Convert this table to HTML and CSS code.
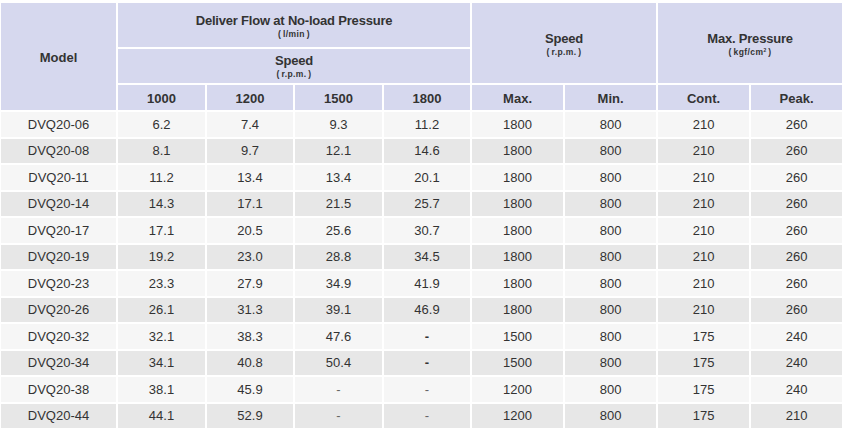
FILE: index.html
```html
<!DOCTYPE html>
<html>
<head>
<meta charset="utf-8">
<link rel="stylesheet" href="styles.css">
</head>
<body>
<table class="spec">
  <colgroup>
    <col class="c-model"><col class="c-a"><col class="c-b"><col class="c-a"><col class="c-b">
    <col class="c-w"><col class="c-w"><col class="c-w"><col class="c-w">
  </colgroup>
  <thead>
    <tr class="h1">
      <th rowspan="3" class="model">Model</th>
      <th colspan="4"><div class="t t-deliver">Deliver Flow at No-load Pressure</div><div class="s">( l/min )</div></th>
      <th colspan="2" rowspan="2"><div class="t t-speed">Speed</div><div class="s">( r.p.m. )</div></th>
      <th colspan="2" rowspan="2"><div class="t t-speed">Max. Pressure</div><div class="s">( kgf/cm<sup>2</sup> )</div></th>
    </tr>
    <tr class="h2">
      <th colspan="4"><div class="t t-sp2">Speed</div><div class="s">( r.p.m. )</div></th>
    </tr>
    <tr class="h3">
      <th>1000</th><th>1200</th><th>1500</th><th>1800</th>
      <th>Max.</th><th>Min.</th><th>Cont.</th><th>Peak.</th>
    </tr>
  </thead>
  <tbody>
    <tr><td>DVQ20-06</td><td>6.2</td><td>7.4</td><td>9.3</td><td>11.2</td><td>1800</td><td>800</td><td>210</td><td>260</td></tr>
    <tr><td>DVQ20-08</td><td>8.1</td><td>9.7</td><td>12.1</td><td>14.6</td><td>1800</td><td>800</td><td>210</td><td>260</td></tr>
    <tr><td>DVQ20-11</td><td>11.2</td><td>13.4</td><td>13.4</td><td>20.1</td><td>1800</td><td>800</td><td>210</td><td>260</td></tr>
    <tr><td>DVQ20-14</td><td>14.3</td><td>17.1</td><td>21.5</td><td>25.7</td><td>1800</td><td>800</td><td>210</td><td>260</td></tr>
    <tr><td>DVQ20-17</td><td>17.1</td><td>20.5</td><td>25.6</td><td>30.7</td><td>1800</td><td>800</td><td>210</td><td>260</td></tr>
    <tr><td>DVQ20-19</td><td>19.2</td><td>23.0</td><td>28.8</td><td>34.5</td><td>1800</td><td>800</td><td>210</td><td>260</td></tr>
    <tr><td>DVQ20-23</td><td>23.3</td><td>27.9</td><td>34.9</td><td>41.9</td><td>1800</td><td>800</td><td>210</td><td>260</td></tr>
    <tr><td>DVQ20-26</td><td>26.1</td><td>31.3</td><td>39.1</td><td>46.9</td><td>1800</td><td>800</td><td>210</td><td>260</td></tr>
    <tr><td>DVQ20-32</td><td>32.1</td><td>38.3</td><td>47.6</td><td class="dash">-</td><td>1500</td><td>800</td><td>175</td><td>240</td></tr>
    <tr><td>DVQ20-34</td><td>34.1</td><td>40.8</td><td>50.4</td><td class="dash">-</td><td>1500</td><td>800</td><td>175</td><td>240</td></tr>
    <tr><td>DVQ20-38</td><td>38.1</td><td>45.9</td><td class="dash light">-</td><td class="dash light">-</td><td>1200</td><td>800</td><td>175</td><td>240</td></tr>
    <tr><td>DVQ20-44</td><td>44.1</td><td>52.9</td><td class="dash light">-</td><td class="dash light">-</td><td>1200</td><td>800</td><td>175</td><td>210</td></tr>
  </tbody>
</table>
</body>
</html>
```
FILE: styles.css
```css
html, body {
  margin: 0;
  padding: 0;
  background: #ffffff;
}

.spec {
  margin: 1px 0 0 -1px;
  border-collapse: separate;
  border-spacing: 2px;
  table-layout: fixed;
  width: 845px;
  font-family: "Liberation Sans", Arial, sans-serif;
  color: #333333;
}

.c-model { width: 115px; }
.c-a { width: 87px; }
.c-b { width: 86px; }
.c-w { width: 91px; }

th {
  background: #d6d8ee;
  font-weight: bold;
  font-size: 13px;
  text-align: center;
  vertical-align: middle;
  padding: 0;
  color: #333333;
}

.h1 { height: 44px; }
.h2 { height: 34px; }
.h3 { height: 25px; }

.h3 th { padding-top: 1px; }

.model { padding-top: 1px; }

.t {
  line-height: 15px;
  letter-spacing: -0.2px;
}

.s {
  font-size: 8.5px;
  line-height: 11px;
  margin-top: 1px;
  letter-spacing: 0.4px;
  word-spacing: -1px;
}

.s sup {
  font-size: 5px;
  vertical-align: 3px;
  line-height: 0;
}

.t-deliver { margin-top: 2px; }
.t-speed { margin-top: 2px; }
.t-sp2 { margin-top: 1px; }

td {
  font-size: 13px;
  text-align: center;
  vertical-align: middle;
  padding: 0;
  height: 24.5px;
  color: #333333;
}

tbody tr:nth-child(odd) td { background: #f6f6f6; }
tbody tr:nth-child(even) td { background: #e7e7e7; }

.dash { font-weight: bold; }
.dash.light { font-weight: normal; color: #666666; }
```
